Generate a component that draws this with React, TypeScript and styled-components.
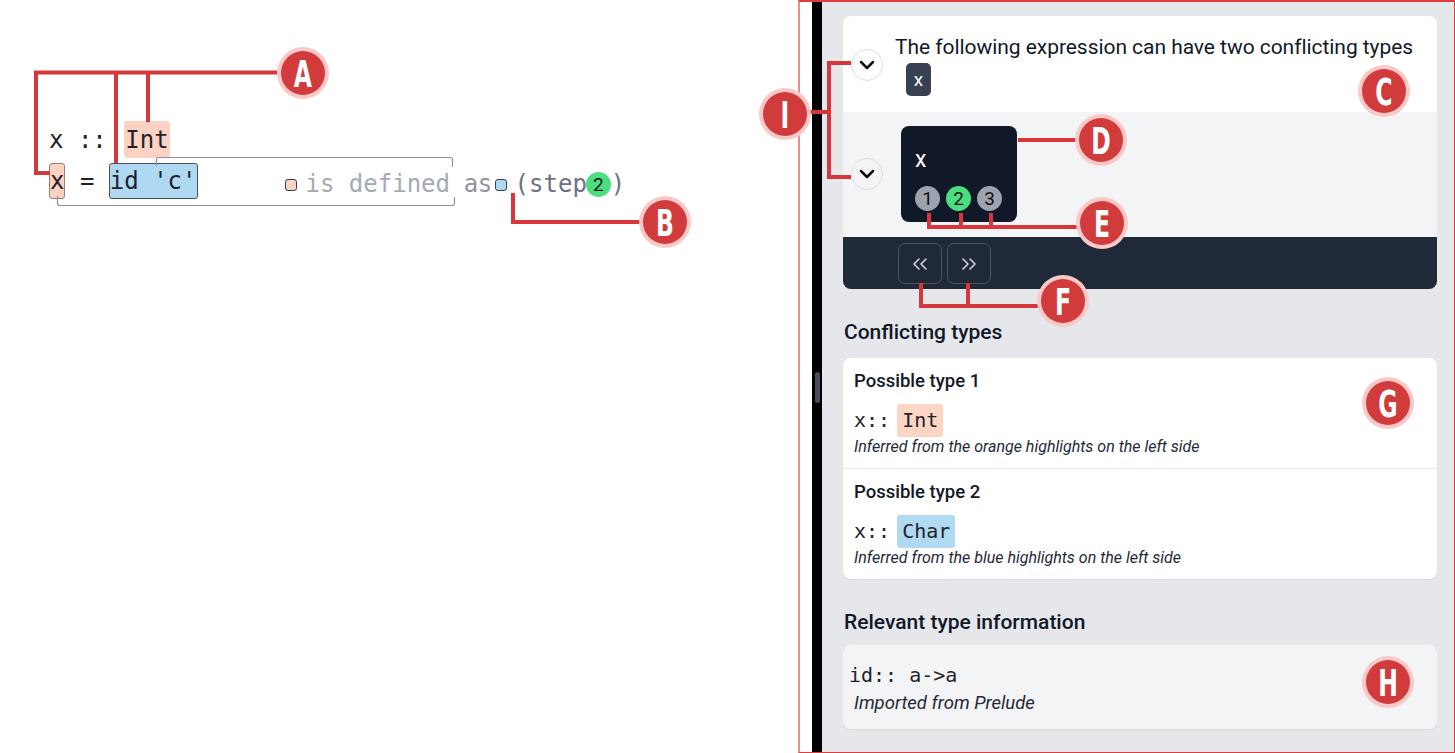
import React from "react";
import styled, { createGlobalStyle } from "styled-components";
import { ChevronDown, ChevronsLeft, ChevronsRight } from "lucide-react";

const Global = createGlobalStyle`
  html, body { margin: 0; padding: 0; background: #fff; }
  body { font-family: Roboto, "Noto Sans", sans-serif; color: #111827; }
  * { box-sizing: border-box; }
`;

const Root = styled.div`
  position: relative;
  width: 1455px;
  height: 753px;
  display: flex;
  overflow: hidden;
  background: #fff;
`;

/* ---------- left: code editor ---------- */
const LeftPane = styled.div`
  width: 798px;
  flex: none;
  padding: 121px 0 0 49px;
`;

const Code = styled.div`
  font-family: "DejaVu Sans Mono", monospace;
  font-size: 24px;
  color: #1f2328;
  display: flex;
  flex-direction: column;
  gap: 4px;
`;

const Line = styled.div`
  display: flex;
  align-items: center;
  height: 37px;
  white-space: pre;
`;

const Mark = styled.span<{ $tone: "orange" | "blue"; $boxed?: boolean }>`
  display: inline-flex;
  align-items: center;
  height: ${(p) => (p.$boxed ? "36px" : "37px")};
  margin-left: ${(p) => (p.$boxed ? "0" : "3px")};
  padding: 0 ${(p) => (p.$boxed ? "0" : "1px")};
  border-radius: 3px;
  background: ${(p) => (p.$tone === "orange" ? "#fcd3c3" : "#afd9f2")};
  border: ${(p) => (p.$boxed ? (p.$tone === "orange" ? "1px solid #9a7c72" : "1.5px solid #4a4f55") : "none")};
`;

const Hint = styled.span`
  display: inline-flex;
  align-items: center;
  margin-left: 87px;
`;

const Swatch = styled.span<{ $tone: "orange" | "blue" }>`
  width: 12px;
  height: 12px;
  flex: none;
  border-radius: 3px;
  border: 1.5px solid #3a3f45;
  background: ${(p) => (p.$tone === "orange" ? "#fcd3c3" : "#afd9f2")};
  transform: translateY(4px);
  margin: ${(p) => (p.$tone === "orange" ? "0 9px 0 0" : "0 8px 0 3px")};
`;

const HintText = styled.span<{ $shade: "light" | "mid" | "dark"; $tight?: boolean }>`
  color: ${(p) => (p.$shade === "light" ? "#a4aab3" : p.$shade === "mid" ? "#8f959e" : "#6b7280")};
  letter-spacing: ${(p) => (p.$tight ? "-0.6px" : "0")};
  transform: translateY(3px);
`;

const StepDot = styled.span`
  width: 25px;
  height: 25px;
  border-radius: 50%;
  background: #4ade80;
  color: #111;
  font-family: Roboto, sans-serif;
  font-size: 19px;
  display: inline-flex;
  align-items: center;
  justify-content: center;
  margin-left: -1px;
  transform: translateY(4px);
`;

/* ---------- right: panel ---------- */
const RightPane = styled.div`
  flex: 1;
  display: flex;
  height: 753px;
  border: 1px solid #e03c3c;
  border-top-width: 2px;
  border-left: 2px solid #ef8b8b;
`;

const Gutter = styled.div`
  width: 12px;
  flex: none;
  background: #fff;
`;

const Splitter = styled.div`
  width: 10px;
  flex: none;
  background: #000;
  display: flex;
  flex-direction: column;
  align-items: center;
  padding-top: 370px;
`;

const Handle = styled.div`
  width: 5px;
  height: 31px;
  border-radius: 3px;
  background: #4a4a5c;
`;

const Panel = styled.div`
  flex: 1;
  background: #e5e7eb;
  padding: 14px 17px 0 21px;
  display: flex;
  flex-direction: column;
`;

const Stepper = styled.div`
  border-radius: 8px;
  overflow: hidden;
`;

const StepRow = styled.div<{ $variant: "top" | "mid" }>`
  display: flex;
  align-items: center;
  gap: ${(p) => (p.$variant === "top" ? "12px" : "18px")};
  padding: ${(p) => (p.$variant === "top" ? "17px 0 16px 8px" : "14px 0 15px 8px")};
  background: ${(p) => (p.$variant === "top" ? "#ffffff" : "#f3f4f6")};
`;

const Toggle = styled.button`
  width: 32px;
  height: 32px;
  flex: none;
  border-radius: 50%;
  border: 1px solid #dcdfe4;
  background: transparent;
  padding: 0;
  display: flex;
  align-items: center;
  justify-content: center;
  color: #111;
`;

const Message = styled.div`
  display: flex;
  flex-direction: column;
  align-items: flex-start;
`;

const MessageText = styled.div`
  font-size: 21px;
  line-height: 28px;
  color: #111827;
  letter-spacing: -0.05px;
`;

const ExprBadge = styled.span`
  margin: 2px 0 0 11px;
  width: 25px;
  height: 33px;
  border-radius: 5px;
  background: #374151;
  color: #fff;
  font-size: 19px;
  display: flex;
  align-items: center;
  justify-content: center;
`;

const ExprCard = styled.div`
  width: 116px;
  height: 96px;
  border-radius: 8px;
  background: #111827;
  padding: 20px 13px 12px 14px;
  display: flex;
  flex-direction: column;
  gap: 12px;
`;

const ExprName = styled.div`
  color: #fff;
  font-size: 23px;
  line-height: 28px;
`;

const Steps = styled.div`
  display: flex;
  gap: 6px;
`;

const StepBubble = styled.span<{ $active?: boolean }>`
  width: 25px;
  height: 25px;
  border-radius: 50%;
  background: ${(p) => (p.$active ? "#4ade80" : "#9ca3af")};
  color: #111;
  font-size: 19px;
  display: flex;
  align-items: center;
  justify-content: center;
`;

const NavBar = styled.div`
  background: #1f2937;
  height: 52px;
  padding: 6px 0 0 55px;
  display: flex;
  gap: 5px;
  align-items: flex-start;
`;

const NavButton = styled.button`
  width: 44px;
  height: 41px;
  border-radius: 7px;
  border: 1px solid #4b5563;
  background: transparent;
  color: #d1d5db;
  display: flex;
  align-items: center;
  justify-content: center;
  padding: 0;
`;

const SectionTitle = styled.h2<{ $after?: number }>`
  margin: 29px 0 ${(p) => p.$after ?? 12}px 1px;
  font-size: 21px;
  line-height: 28px;
  font-weight: 500;
  color: #111827;
`;

const TypesCard = styled.div`
  background: #fff;
  border-radius: 8px;
  box-shadow: 0 1px 2px rgba(0, 0, 0, 0.06);
  display: flex;
  flex-direction: column;
`;

const TypeItem = styled.div<{ $divided?: boolean }>`
  padding: 11px 11px 10px;
  border-top: ${(p) => (p.$divided ? "1px solid #e5e7eb" : "none")};
`;

const ItemTitle = styled.div`
  font-size: 18.5px;
  line-height: 24px;
  font-weight: 500;
  color: #111827;
`;

const Sig = styled.div<{ $gap?: number }>`
  margin-top: ${(p) => p.$gap ?? 11}px;
  height: 32px;
  display: flex;
  align-items: center;
  font-family: "DejaVu Sans Mono", monospace;
  font-size: 20px;
  color: #1f2328;
  white-space: pre;
`;

const SigType = styled.span<{ $tone: "orange" | "blue" }>`
  margin-left: 7px;
  height: 33px;
  padding: 0 5px;
  border-radius: 3px;
  display: inline-flex;
  align-items: center;
  background: ${(p) => (p.$tone === "orange" ? "#fdd5c5" : "#b0d9f2")};
`;

const Note = styled.div<{ $size?: number; $indent?: number }>`
  font-size: ${(p) => p.$size ?? 16}px;
  line-height: ${(p) => (p.$size ? 24 : 22)}px;
  font-style: italic;
  color: #1f2937;
  margin-left: ${(p) => p.$indent ?? 0}px;
`;

const InfoCard = styled.div`
  background: #f3f4f6;
  border-radius: 8px;
  padding: 14px 11px 14px 6px;
  box-shadow: 0 1px 2px rgba(0, 0, 0, 0.05);
`;

/* ---------- annotation overlay ---------- */
const Overlay = styled.svg`
  position: absolute;
  left: 0;
  top: 0;
  pointer-events: none;
`;

const marks: { l: string; x: number; y: number }[] = [
  { l: "A", x: 303, y: 73 },
  { l: "B", x: 665, y: 222 },
  { l: "C", x: 1384, y: 91 },
  { l: "D", x: 1101, y: 140 },
  { l: "E", x: 1102, y: 223 },
  { l: "F", x: 1063, y: 301 },
  { l: "G", x: 1388, y: 403 },
  { l: "H", x: 1388, y: 682 },
  { l: "I", x: 785, y: 114 },
];

const Annotations = () => (
  <Overlay width={1455} height={753} viewBox="0 0 1455 753">
    <g fill="none" stroke="#8f9296" strokeWidth={1.2}>
      <path d="M156.5 166 V159.5 Q156.5 157.5 158.5 157.5 H450 Q452.5 157.5 452.5 159.5 V167" />
      <path d="M57.5 196 V203 Q57.5 205.5 59.5 205.5 H452 Q454.5 205.5 454.5 203 V197" />
    </g>
    <g fill="none" stroke="#d7363a" strokeWidth={4} strokeLinejoin="miter">
      <path d="M278 72.5 H36 V173 H50" />
      <path d="M116 72.5 V163" />
      <path d="M148 72.5 V122" />
      <path d="M513 193 V222 H641" />
      <path d="M1018 140 H1077" />
      <path d="M929 213 V227 M961 213 V227 M991 213 V227 M927 227 H1078" />
      <path d="M921 283 V306 H1040 M968 283 V306" />
      <path d="M809 112 H829 M851 63 H829 V177 H851" />
    </g>
    {marks.map((m) => (
      <g key={m.l}>
        <circle cx={m.x} cy={m.y} r={26} fill="#fcc9c9" />
        <circle cx={m.x} cy={m.y} r={22} fill="#d13b3c" />
        <text
          x={m.x}
          y={m.y + 14}
          fontSize={38}
          fontWeight={700}
          fontFamily="'DejaVu Sans', sans-serif"
          fill="#fff"
          textAnchor="middle"
          transform={`translate(${m.x} 0) scale(0.62 1) translate(${-m.x} 0)`}
        >
          {m.l}
        </text>
      </g>
    ))}
  </Overlay>
);

export default function App() {
  return (
    <>
      <Global />
      <Root>
        <LeftPane>
          <Code>
            <Line>
              {"x :: "}
              <Mark $tone="orange">Int</Mark>
            </Line>
            <Line>
              <Mark $tone="orange" $boxed>x</Mark>
              {" = "}
              <Mark $tone="blue" $boxed>id 'c'</Mark>
              <Hint>
                <Swatch $tone="orange" />
                <HintText $shade="light">is defined</HintText>
                <HintText $shade="mid" $tight>{" as"}</HintText>
                <Swatch $tone="blue" />
                <HintText $shade="dark">(step</HintText>
                <StepDot>2</StepDot>
                <HintText $shade="dark">)</HintText>
              </Hint>
            </Line>
          </Code>
        </LeftPane>

        <RightPane>
          <Gutter />
          <Splitter>
            <Handle />
          </Splitter>
          <Panel>
            <Stepper>
              <StepRow $variant="top">
                <Toggle aria-label="collapse">
                  <ChevronDown size={24} strokeWidth={2.5} />
                </Toggle>
                <Message>
                  <MessageText>The following expression can have two conflicting types</MessageText>
                  <ExprBadge>x</ExprBadge>
                </Message>
              </StepRow>
              <StepRow $variant="mid">
                <Toggle aria-label="collapse steps">
                  <ChevronDown size={24} strokeWidth={2.5} />
                </Toggle>
                <ExprCard>
                  <ExprName>x</ExprName>
                  <Steps>
                    <StepBubble>1</StepBubble>
                    <StepBubble $active>2</StepBubble>
                    <StepBubble>3</StepBubble>
                  </Steps>
                </ExprCard>
              </StepRow>
              <NavBar>
                <NavButton aria-label="previous">
                  <ChevronsLeft size={24} strokeWidth={1.6} />
                </NavButton>
                <NavButton aria-label="next">
                  <ChevronsRight size={24} strokeWidth={1.6} />
                </NavButton>
              </NavBar>
            </Stepper>

            <SectionTitle>Conflicting types</SectionTitle>
            <TypesCard>
              <TypeItem>
                <ItemTitle>Possible type 1</ItemTitle>
                <Sig>
                  x::
                  <SigType $tone="orange">Int</SigType>
                </Sig>
                <Note>Inferred from the orange highlights on the left side</Note>
              </TypeItem>
              <TypeItem $divided>
                <ItemTitle>Possible type 2</ItemTitle>
                <Sig>
                  x::
                  <SigType $tone="blue">Char</SigType>
                </Sig>
                <Note>Inferred from the blue highlights on the left side</Note>
              </TypeItem>
            </TypesCard>

            <SectionTitle $after={9}>Relevant type information</SectionTitle>
            <InfoCard>
              <Sig $gap={0}>{"id:: a->a"}</Sig>
              <Note $size={18.5} $indent={5}>Imported from Prelude</Note>
            </InfoCard>
          </Panel>
        </RightPane>
        <Annotations />
      </Root>
    </>
  );
}
